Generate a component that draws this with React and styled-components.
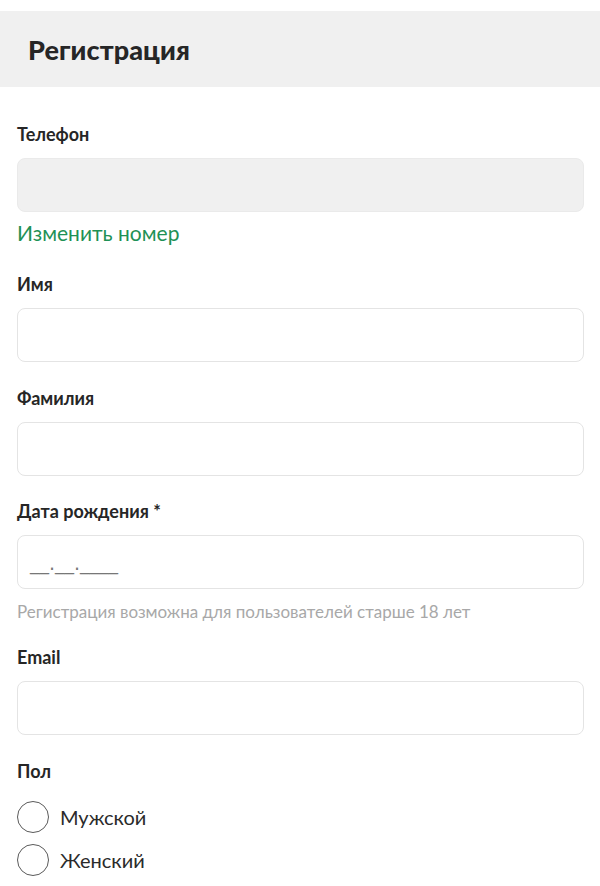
import React from "react";
import styled, { createGlobalStyle } from "styled-components";

const Global = createGlobalStyle`
  html, body { margin: 0; padding: 0; background: #fff; }
  body { font-family: Lato, "Noto Sans", sans-serif; color: #222; }
  * { box-sizing: border-box; }
`;

const Page = styled.div`
  width: 600px;
  padding-top: 11px;
`;

const Header = styled.header`
  height: 76px;
  background: #f0f0f0;
  display: flex;
  align-items: center;
  padding-left: 28px;
`;

const Title = styled.h1`
  margin: 0;
  font-size: 27px;
  font-weight: 900;
  color: #262626;
  letter-spacing: 0.1px;
`;

const Form = styled.form`
  display: flex;
  flex-direction: column;
  padding: 36px 16px 0 17px;
`;

const Field = styled.div`
  display: flex;
  flex-direction: column;
  margin-bottom: ${(p) => p.$mb ?? 25}px;
`;

const Label = styled.label`
  font-size: 18px;
  font-weight: 700;
  line-height: 22px;
  color: #262626;
  margin-bottom: 13px;
`;

const Input = styled.div`
  height: 54px;
  border-radius: 8px;
  border: 1px solid ${(p) => (p.$disabled ? "#eaeaea" : "#e4e4e4")};
  background: ${(p) => (p.$disabled ? "#f0f0f0" : "#fff")};
  display: flex;
  align-items: center;
  padding: 0 12px;
  font-size: 16px;
  color: #888;
`;

const Mask = styled.span`
  font-family: "DejaVu Sans", sans-serif;
  font-size: 19px;
  line-height: 24px;
  color: #777;
  padding-top: 2px;
`;

const Link = styled.a`
  margin-top: 8px;
  font-size: 21px;
  line-height: 26px;
  color: #1f9156;
  text-decoration: none;
`;

const Hint = styled.div`
  margin-top: 13px;
  font-size: 17px;
  line-height: 20px;
  color: #a8a8a8;
`;

const Radios = styled.div`
  display: flex;
  flex-direction: column;
  gap: 11px;
  margin-top: 6px;
`;

const RadioRow = styled.label`
  display: flex;
  align-items: center;
  gap: 11px;
  font-size: 20px;
  color: #2a2a2a;
`;

const Circle = styled.span`
  width: 32px;
  height: 32px;
  border-radius: 50%;
  border: 1.5px solid #5a5a5a;
  flex: none;
`;

export default function App() {
  return (
    <Page>
      <Global />
      <Header>
        <Title>Регистрация</Title>
      </Header>
      <Form>
        <Field $mb={27}>
          <Label>Телефон</Label>
          <Input $disabled />
          <Link href="#">Изменить номер</Link>
        </Field>
        <Field>
          <Label>Имя</Label>
          <Input />
        </Field>
        <Field $mb={24}>
          <Label>Фамилия</Label>
          <Input />
        </Field>
        <Field $mb={24}>
          <Label>Дата рождения *</Label>
          <Input>
            <Mask>__.__.____</Mask>
          </Input>
          <Hint>Регистрация возможна для пользователей старше 18 лет</Hint>
        </Field>
        <Field>
          <Label>Email</Label>
          <Input />
        </Field>
        <Field>
          <Label>Пол</Label>
          <Radios>
            <RadioRow>
              <Circle />
              Мужской
            </RadioRow>
            <RadioRow>
              <Circle />
              Женский
            </RadioRow>
          </Radios>
        </Field>
      </Form>
    </Page>
  );
}
